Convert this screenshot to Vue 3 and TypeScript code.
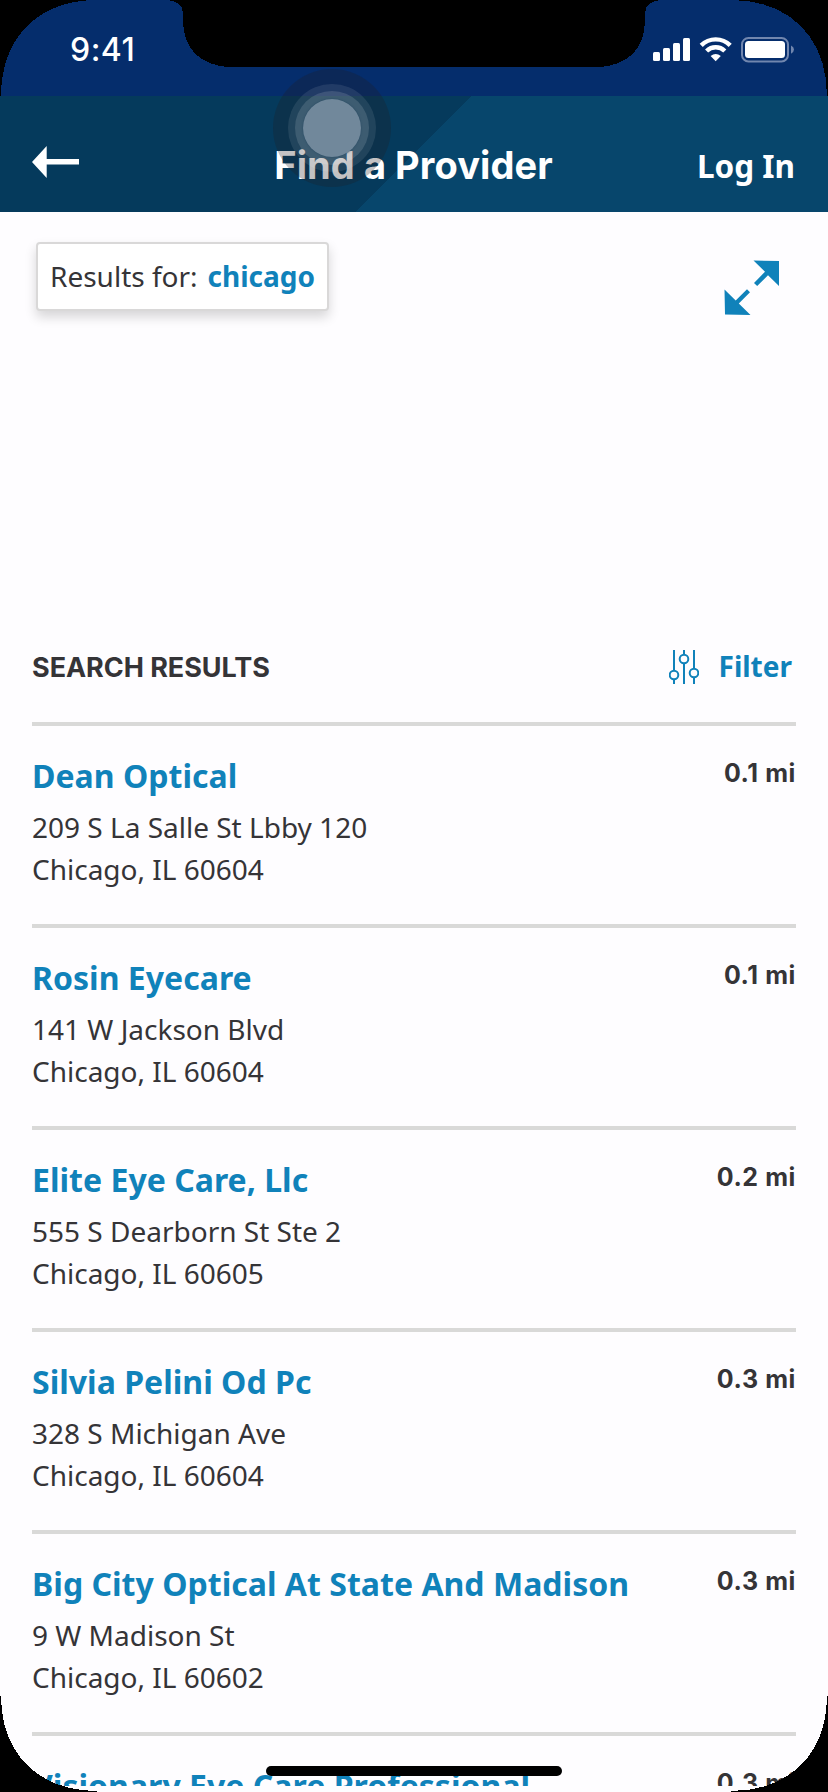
<script setup lang="ts">
interface Provider {
  name: string
  street: string
  city: string
  distance: string
}

const searchTerm = 'chicago'

const providers: Provider[] = [
  { name: 'Dean Optical', street: '209 S La Salle St Lbby 120', city: 'Chicago, IL 60604', distance: '0.1 mi' },
  { name: 'Rosin Eyecare', street: '141 W Jackson Blvd', city: 'Chicago, IL 60604', distance: '0.1 mi' },
  { name: 'Elite Eye Care, Llc', street: '555 S Dearborn St Ste 2', city: 'Chicago, IL 60605', distance: '0.2 mi' },
  { name: 'Silvia Pelini Od Pc', street: '328 S Michigan Ave', city: 'Chicago, IL 60604', distance: '0.3 mi' },
  { name: 'Big City Optical At State And Madison', street: '9 W Madison St', city: 'Chicago, IL 60602', distance: '0.3 mi' },
  { name: 'Visionary Eye Care Professional', street: '', city: '', distance: '0.3 mi' },
]
</script>

<template>
  <div class="phone">
    <div class="viewport">
      <div class="status">
        <span class="time">9:41</span>
        <svg class="status-icons" width="142" height="26" viewBox="0 0 142 26" fill="#fff">
          <rect x="0" y="15" width="7" height="9" rx="1.5" />
          <rect x="10" y="11" width="7" height="13" rx="1.5" />
          <rect x="20" y="6" width="7" height="18" rx="1.5" />
          <rect x="30" y="1" width="7" height="23" rx="1.5" />
          <g fill="none" stroke="#fff" stroke-width="4.4">
            <path d="M48.2 8.4 A20.5 20.5 0 0 1 77.2 8.4" />
            <path d="M53.6 14 A13 13 0 0 1 71.8 14" />
          </g>
          <path d="M57.6 19 Q62.7 15 67.8 19 L62.7 24.2 Z" />
          <rect x="89" y="1" width="46" height="23.4" rx="6.5" fill="none" stroke="#7186ae" stroke-width="2" />
          <rect x="92" y="4" width="40" height="17" rx="3.5" />
          <path d="M138 8.5 Q141 10 141 12.6 Q141 15.200 138 16.700 Z" fill="#7186ae" />
        </svg>
      </div>

      <header class="nav">
        <svg class="back" width="47" height="34" viewBox="0 0 47 34" fill="#fff">
          <path d="M0 17 L14.700 1 V14 H47 V19.600 H14.700 V33 Z" />
        </svg>
        <h1 class="title">Find a Provider</h1>
        <a class="login">Log In</a>
      </header>

      <section class="map">
        <div class="chip">
          <span class="chip-label">Results for:</span>
          <b class="chip-term">{{ searchTerm }}</b>
        </div>
        <svg class="expand" width="56" height="56" viewBox="0 0 56 56" fill="#1082ba">
          <path d="M29.500 0.500 L55 1 V26 L44 15.200 L33.200 26 L30 23 L41 11.800 Z" />
          <path d="M0.500 29.500 L11.700 40.600 L23 29.200 L26 32.200 L14.800 43.600 L26.500 55 L1 54.500 Z" />
        </svg>
      </section>

      <div class="results-head">
        <h2 class="results-title">SEARCH RESULTS</h2>
        <a class="filter">
          <svg width="30" height="34" viewBox="0 0 30 34" fill="none" stroke="#1082ba" stroke-width="2">
            <path d="M5 0 V20.500 M5 29.500 V34 M15 0 V4.500 M15 13.500 V34 M25 0 V18.500 M25 27.500 V34" />
            <circle cx="5" cy="25" r="4.300" />
            <circle cx="15" cy="9" r="4.300" />
            <circle cx="25" cy="23" r="4.300" />
          </svg>
          <span class="filter-label">Filter</span>
        </a>
      </div>

      <ul class="list">
        <li v-for="p in providers" :key="p.name" class="row">
          <div class="info">
            <a class="name">{{ p.name }}</a>
            <div class="address">{{ p.street }}<br />{{ p.city }}</div>
          </div>
          <span class="distance">{{ p.distance }}</span>
        </li>
      </ul>
    </div>

    <div class="touch"><div class="touch-a"><div class="touch-b"><div class="touch-c"></div></div></div></div>
    <div class="home"></div>
    <svg class="bezel" width="828" height="1792" viewBox="0 0 828 1792" shape-rendering="crispEdges">
      <path d="M0 0 H97 C38 0 1 38 1 96 H0 Z" />
      <path d="M828 0 H731 C790 0 827 38 827 96 H828 Z" />
      <path d="M167 0 C178 1 183 5 183 14 V20 C183 50 201 65 228 67 H600 C627 65 645 50 645 20 V14 C645 5 650 1 661 0 Z" />
      <path d="M0 1792 V1696 H1 C1 1753 38 1791 97 1791 V1792 Z" />
      <path d="M828 1792 V1696 H827 C827 1753 790 1791 731 1791 V1792 Z" />
    </svg>
  </div>
</template>

<style>
body {
  margin: 0;
  background: #fefdff;
}
</style>

<style scoped>
.phone {
  position: relative;
  width: 828px;
  height: 1792px;
  overflow: hidden;
  background: #fefdff;
  color: #353437;
  font-family: "Noto Sans", sans-serif;
}
.viewport {
  height: 1786px;
  overflow: hidden;
}
.status {
  display: flex;
  justify-content: space-between;
  box-sizing: border-box;
  height: 96px;
  padding: 30px 33px 0 70px;
  background: #052d6c;
}
.time {
  font: 500 32px/40px Inter, sans-serif;
  letter-spacing: 0.5px;
  color: #fff;
}
.status-icons {
  margin-top: 7px;
}
.nav {
  display: grid;
  grid-template-columns: 180px 1fr 180px;
  box-sizing: border-box;
  height: 116px;
  padding: 0 33px 0 32px;
  background: linear-gradient(135deg, #053a5c 0 50%, #07466c 50%);
  color: #fff;
}
.back {
  margin-top: 49px;
}
.title {
  margin: 45px 0 0;
  font: 700 38px/48px Inter, sans-serif;
  letter-spacing: 0.08px;
  text-align: center;
  white-space: nowrap;
}
.login {
  margin-top: 48px;
  font-size: 31.5px;
  font-weight: 700;
  line-height: 44px;
  text-align: right;
}
.map {
  display: flex;
  justify-content: space-between;
  align-items: flex-start;
  box-sizing: border-box;
  height: 408px;
  padding: 30px 48px 0 36px;
}
.chip {
  display: flex;
  gap: 10px;
  box-sizing: border-box;
  width: 293px;
  height: 69px;
  padding: 12px 0 0 12px;
  border: 2px solid #d9d8d8;
  border-radius: 4px;
  background: #fff;
  box-shadow: 0 6px 12px rgba(0, 0, 0, 0.16);
  font-size: 28px;
  line-height: 40px;
  white-space: nowrap;
}
.chip-term {
  color: #1082ba;
}
.expand {
  margin-top: 18px;
}
.results-head {
  display: flex;
  justify-content: space-between;
  box-sizing: border-box;
  height: 106px;
  margin: 0 32px;
  padding-top: 28px;
  border-bottom: 4px solid #d9d9d8;
}
.results-title {
  margin: 1px 0 0;
  font: 700 27px/38px Inter, sans-serif;
  letter-spacing: -0.05px;
}
.filter {
  display: flex;
  gap: 20px;
  padding: 2px 4px 0 0;
  color: #1082ba;
  font-size: 28px;
  font-weight: 700;
  line-height: 34px;
}
.filter-label {
  margin-top: -1px;
}
.list {
  margin: 0;
  padding: 0 32px;
  list-style: none;
}
.row {
  display: flex;
  justify-content: space-between;
  box-sizing: border-box;
  height: 202px;
  padding-top: 28px;
  border-bottom: 4px solid #d9d9d8;
}
.name {
  display: block;
  color: #1082ba;
  font-size: 32px;
  font-weight: 700;
  line-height: 44px;
  letter-spacing: 0.02px;
  white-space: nowrap;
}
.address {
  margin-top: 8px;
  font-size: 28px;
  line-height: 42px;
}
.distance {
  margin-top: 4px;
  font: 700 25px/30px Inter, sans-serif;
  letter-spacing: 0.6px;
}
.touch,
.touch-a,
.touch-b,
.touch-c {
  display: grid;
  place-items: center;
  border-radius: 50%;
}
.touch {
  position: absolute;
  left: 273px;
  top: 69px;
  width: 118px;
  height: 118px;
  background: rgba(35, 30, 35, 0.27);
}
.touch-a {
  width: 88px;
  height: 88px;
  background: rgba(255, 255, 255, 0.09);
}
.touch-b {
  width: 74px;
  height: 74px;
  background: rgba(255, 255, 255, 0.13);
}
.touch-c {
  width: 58px;
  height: 58px;
  background: #71889b;
  box-shadow: 0 0 2px #244660;
}
.home {
  position: absolute;
  left: 266px;
  top: 1766px;
  width: 296px;
  height: 10px;
  border-radius: 5px;
  background: #000;
}
.bezel {
  position: absolute;
  left: 0;
  top: 0;
}
</style>
